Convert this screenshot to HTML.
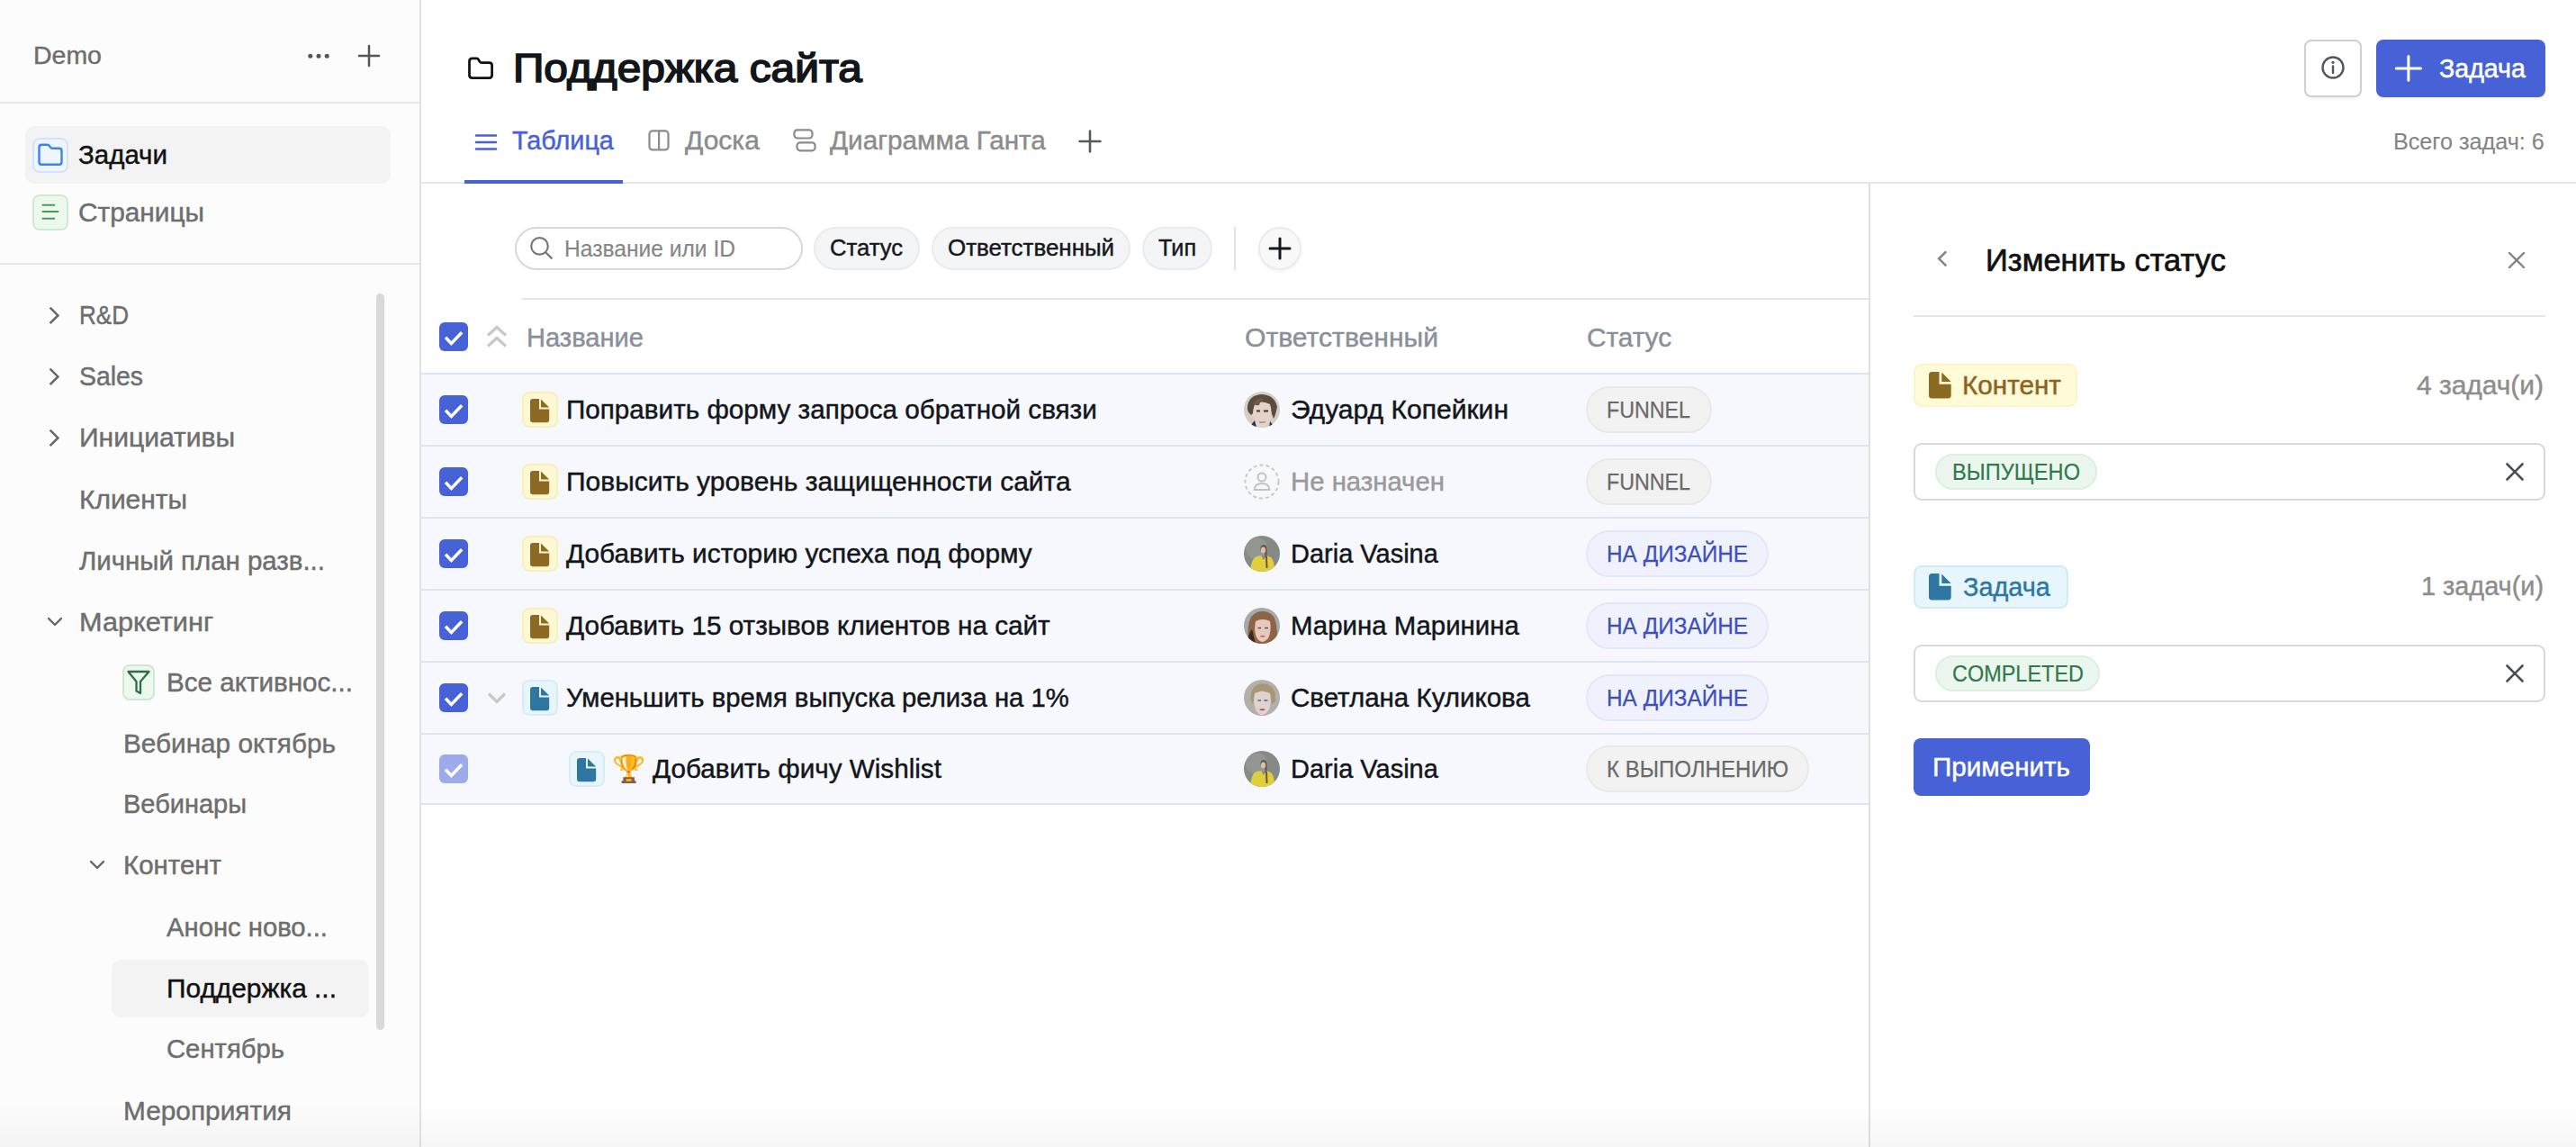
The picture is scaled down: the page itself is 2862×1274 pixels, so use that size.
<!DOCTYPE html>
<html><head><meta charset="utf-8"><style>
html,body{margin:0;padding:0;}
body{width:2862px;height:1274px;overflow:hidden;position:relative;background:#fff;font-family:"Liberation Sans", sans-serif;}
body>div{-webkit-text-stroke:0.45px currentColor;}
@media (max-width: 2000px) { html { zoom: 0.5; } }
</style></head><body>
<div style="position:absolute;left:0px;top:0px;width:466px;height:1274px;background:#fcfcfc;"></div>
<div style="position:absolute;left:466px;top:0px;width:2px;height:1274px;background:#e0e2e6;"></div>
<div style="position:absolute;left:37px;top:47.14px;font-size:28.5px;line-height:28.5px;color:#6e6e6e;font-weight:400;white-space:nowrap;transform:scaleX(0.9988);transform-origin:left center;">Demo</div>
<svg style="position:absolute;left:338px;top:50px" width="32" height="24" viewBox="0 0 32 24" fill="none"><circle cx="6.8" cy="12.3" r="2.5" fill="#555"/><circle cx="16" cy="12.3" r="2.5" fill="#555"/><circle cx="25.2" cy="12.3" r="2.5" fill="#555"/></svg>
<svg style="position:absolute;left:396px;top:48px" width="28" height="28" viewBox="0 0 28 28" fill="none"><path d="M14 3v22M3 14h22" stroke="#555" stroke-width="2.5" stroke-linecap="round"/></svg>
<div style="position:absolute;left:0px;top:113px;width:466px;height:2px;background:#e8e8e8;"></div>
<div style="position:absolute;left:28px;top:140px;width:406px;height:64px;background:#f3f3f3;border-radius:10px;"></div>
<div style="position:absolute;left:36px;top:153px;width:40px;height:39px;background:#eef5ff;border:2px solid #d3e3fc;border-radius:8px;box-sizing:border-box;"></div>
<svg style="position:absolute;left:36px;top:152px" width="40" height="40" viewBox="0 0 40 40" fill="none"><path d="M7.5 11.5 Q7.5 8.8 10.2 8.8 H16.5 Q18 8.8 19 10.2 L20 11.6 Q20.8 12.8 22.3 12.8 H29.8 Q32.5 12.8 32.5 15.5 V28 Q32.5 30.7 29.8 30.7 H10.2 Q7.5 30.7 7.5 28 Z" stroke="#3b82f6" stroke-width="2.4" stroke-linejoin="round"/></svg>
<div style="position:absolute;left:87px;top:157.31px;font-size:29.5px;line-height:29.5px;color:#111;font-weight:400;white-space:nowrap;transform:scaleX(0.9988);transform-origin:left center;">Задачи</div>
<div style="position:absolute;left:36px;top:216px;width:40px;height:40px;background:#ecf7ee;border:2px solid #cfe8d4;border-radius:8px;box-sizing:border-box;"></div>
<svg style="position:absolute;left:36px;top:216px" width="40" height="40" viewBox="0 0 40 40" fill="none"><path d="M10.7 11.8H25M10.7 18.9H29.2M10.7 26.7H25" stroke="#4a9a5c" stroke-width="2"/></svg>
<div style="position:absolute;left:87px;top:221.12px;font-size:29.5px;line-height:29.5px;color:#6e6e6e;font-weight:400;white-space:nowrap;transform:scaleX(1.0108);transform-origin:left center;">Страницы</div>
<div style="position:absolute;left:0px;top:292px;width:466px;height:2px;background:#e8e8e8;"></div>
<div style="position:absolute;left:88px;top:334.51px;font-size:29.5px;line-height:29.5px;color:#6e6e6e;font-weight:400;white-space:nowrap;transform:scaleX(0.8836);transform-origin:left center;">R&amp;D</div>
<svg style="position:absolute;left:52px;top:338px" width="16" height="24" viewBox="0 0 16 24" fill="none"><path d="M3.6 3.6 L12.4 12.4 L3.6 21.2" stroke="#666" stroke-width="2.5"/></svg>
<div style="position:absolute;left:88px;top:402.51px;font-size:29.5px;line-height:29.5px;color:#6e6e6e;font-weight:400;white-space:nowrap;transform:scaleX(0.9627);transform-origin:left center;">Sales</div>
<svg style="position:absolute;left:52px;top:406px" width="16" height="24" viewBox="0 0 16 24" fill="none"><path d="M3.6 3.6 L12.4 12.4 L3.6 21.2" stroke="#666" stroke-width="2.5"/></svg>
<div style="position:absolute;left:88px;top:470.51px;font-size:29.5px;line-height:29.5px;color:#6e6e6e;font-weight:400;white-space:nowrap;transform:scaleX(1.0181);transform-origin:left center;">Инициативы</div>
<svg style="position:absolute;left:52px;top:474px" width="16" height="24" viewBox="0 0 16 24" fill="none"><path d="M3.6 3.6 L12.4 12.4 L3.6 21.2" stroke="#666" stroke-width="2.5"/></svg>
<div style="position:absolute;left:88px;top:539.51px;font-size:29.5px;line-height:29.5px;color:#6e6e6e;font-weight:400;white-space:nowrap;transform:scaleX(1.0144);transform-origin:left center;">Клиенты</div>
<div style="position:absolute;left:88px;top:607.51px;font-size:29.5px;line-height:29.5px;color:#6e6e6e;font-weight:400;white-space:nowrap;transform:scaleX(0.9972);transform-origin:left center;">Личный план разв...</div>
<div style="position:absolute;left:88px;top:675.51px;font-size:29.5px;line-height:29.5px;color:#6e6e6e;font-weight:400;white-space:nowrap;transform:scaleX(1.0393);transform-origin:left center;">Маркетинг</div>
<svg style="position:absolute;left:51px;top:681px" width="20" height="20" viewBox="0 0 20 20" fill="none"><path d="M3 6 L10 13 L17 6" stroke="#666" stroke-width="2.4" stroke-linecap="round" stroke-linejoin="round"/></svg>
<div style="position:absolute;left:136px;top:738px;width:36px;height:40px;background:#ecf7ee;border:2px solid #cfe8d4;border-radius:8px;box-sizing:border-box;"></div>
<svg style="position:absolute;left:136px;top:738px" width="36" height="40" viewBox="0 0 36 40" fill="none"><path d="M6.5 8 H29.5 L20 19 V32 L15.5 29.5 V19 Z" stroke="#2e6e45" stroke-width="2.3" stroke-linejoin="round"/></svg>
<div style="position:absolute;left:185px;top:742.51px;font-size:29.5px;line-height:29.5px;color:#6e6e6e;font-weight:400;white-space:nowrap;transform:scaleX(1.0031);transform-origin:left center;">Все активнос...</div>
<div style="position:absolute;left:137px;top:810.51px;font-size:29.5px;line-height:29.5px;color:#6e6e6e;font-weight:400;white-space:nowrap;transform:scaleX(1.0076);transform-origin:left center;">Вебинар октябрь</div>
<div style="position:absolute;left:137px;top:877.51px;font-size:29.5px;line-height:29.5px;color:#6e6e6e;font-weight:400;white-space:nowrap;transform:scaleX(0.9829);transform-origin:left center;">Вебинары</div>
<svg style="position:absolute;left:98px;top:951px" width="20" height="20" viewBox="0 0 20 20" fill="none"><path d="M3 6 L10 13 L17 6" stroke="#666" stroke-width="2.4" stroke-linecap="round" stroke-linejoin="round"/></svg>
<div style="position:absolute;left:137px;top:945.51px;font-size:29.5px;line-height:29.5px;color:#6e6e6e;font-weight:400;white-space:nowrap;transform:scaleX(0.9973);transform-origin:left center;">Контент</div>
<div style="position:absolute;left:185px;top:1014.51px;font-size:29.5px;line-height:29.5px;color:#6e6e6e;font-weight:400;white-space:nowrap;transform:scaleX(0.9907);transform-origin:left center;">Анонс ново...</div>
<div style="position:absolute;left:124px;top:1066px;width:286px;height:64px;background:#f3f3f3;border-radius:10px;"></div>
<div style="position:absolute;left:185px;top:1082.52px;font-size:29.5px;line-height:29.5px;color:#111;font-weight:400;white-space:nowrap;transform:scaleX(1.0121);transform-origin:left center;">Поддержка ...</div>
<div style="position:absolute;left:185px;top:1149.52px;font-size:29.5px;line-height:29.5px;color:#6e6e6e;font-weight:400;white-space:nowrap;transform:scaleX(0.9912);transform-origin:left center;">Сентябрь</div>
<div style="position:absolute;left:137px;top:1218.52px;font-size:29.5px;line-height:29.5px;color:#6e6e6e;font-weight:400;white-space:nowrap;transform:scaleX(1.0110);transform-origin:left center;">Мероприятия</div>
<div style="position:absolute;left:418px;top:326px;width:9px;height:818px;background:#d9d9d9;border-radius:5px;"></div>
<svg style="position:absolute;left:516px;top:60px" width="36" height="32" viewBox="0 0 36 32" fill="none"><path d="M5.5 8 Q5.5 4.8 8.7 4.8 H13.5 Q15 4.8 15.6 6.2 L17 8.5 Q17.6 9.7 19 9.7 H27.5 Q30.6 9.7 30.6 12.8 V23.5 Q30.6 26.6 27.5 26.6 H8.7 Q5.5 26.6 5.5 23.5 Z" stroke="#0f1215" stroke-width="2.75" stroke-linejoin="round"/></svg>
<div style="position:absolute;left:570px;top:54.07px;font-size:44.5px;line-height:44.5px;color:#12161a;font-weight:400;white-space:nowrap;transform:scaleX(1.0744);transform-origin:left center;-webkit-text-stroke:1.7px #12161a;">Поддержка сайта</div>
<svg style="position:absolute;left:526px;top:144px" width="28" height="28" viewBox="0 0 28 28" fill="none"><path d="M3 6.5H25M3 14H25M3 21.5H25" stroke="#4762d6" stroke-width="2.6" stroke-linecap="round"/></svg>
<div style="position:absolute;left:569px;top:140.51px;font-size:29.5px;line-height:29.5px;color:#4762d6;font-weight:400;white-space:nowrap;transform:scaleX(0.9759);transform-origin:left center;">Таблица</div>
<svg style="position:absolute;left:718px;top:143px" width="28" height="30" viewBox="0 0 28 30" fill="none"><rect x="3.5" y="2.4" width="21" height="21" rx="3.5" stroke="#8c8c8c" stroke-width="2.2"/><path d="M14.1 3V23" stroke="#8c8c8c" stroke-width="2.2"/></svg>
<div style="position:absolute;left:761px;top:140.51px;font-size:29.5px;line-height:29.5px;color:#8c8c8c;font-weight:400;white-space:nowrap;transform:scaleX(1.0176);transform-origin:left center;">Доска</div>
<svg style="position:absolute;left:879px;top:143px" width="30" height="30" viewBox="0 0 30 30" fill="none"><rect x="3.4" y="1.3" width="20.1" height="9.2" rx="3.5" stroke="#8c8c8c" stroke-width="2.2"/><rect x="6.5" y="15.3" width="20.1" height="9" rx="3.5" stroke="#8c8c8c" stroke-width="2.2"/></svg>
<div style="position:absolute;left:922px;top:140.51px;font-size:29.5px;line-height:29.5px;color:#8c8c8c;font-weight:400;white-space:nowrap;transform:scaleX(1.0069);transform-origin:left center;">Диаграмма Ганта</div>
<svg style="position:absolute;left:1197px;top:143px" width="28" height="28" viewBox="0 0 28 28" fill="none"><path d="M14 2.5v23M2.5 14h23" stroke="#555a61" stroke-width="2.6" stroke-linecap="round"/></svg>
<div style="position:absolute;left:468px;top:202px;width:2394px;height:2px;background:#e6e6e6;"></div>
<div style="position:absolute;left:516px;top:200px;width:176px;height:4px;background:#4762d6;"></div>
<div style="position:absolute;left:2560px;top:44px;width:64px;height:64px;background:#fff;border:2px solid #cfd0d6;border-radius:8px;box-sizing:border-box;box-shadow:0 2px 2px rgba(0,0,0,0.05);"></div>
<svg style="position:absolute;left:2578px;top:61px" width="28" height="28" viewBox="0 0 28 28" fill="none"><circle cx="14" cy="14" r="11.5" stroke="#54585e" stroke-width="2.4"/><path d="M14 12.5V20" stroke="#54585e" stroke-width="2.4" stroke-linecap="round"/><circle cx="14" cy="8.3" r="1.6" fill="#54585e"/></svg>
<div style="position:absolute;left:2640px;top:44px;width:188px;height:64px;background:#4762d6;border-radius:8px;box-shadow:0 2px 2px rgba(0,0,0,0.05);"></div>
<svg style="position:absolute;left:2659px;top:59px" width="34" height="34" viewBox="0 0 34 34" fill="none"><path d="M16.9 3.5V30.3M3.3 17.1H30.5" stroke="#fff" stroke-width="3" stroke-linecap="round"/></svg>
<div style="position:absolute;left:2710px;top:62.13px;font-size:29px;line-height:29px;color:#fff;font-weight:400;white-space:nowrap;transform:scaleX(0.9852);transform-origin:left center;-webkit-text-stroke:0.55px #fff;">Задача</div>
<div style="position:absolute;right:35px;top:145.08px;font-size:25.2px;line-height:25.2px;color:#858585;font-weight:400;white-space:nowrap;transform:scaleX(1.0003);transform-origin:right center;-webkit-text-stroke:0.1px #858585;">Всего задач: 6</div>
<div style="position:absolute;left:572px;top:252px;width:320px;height:48px;background:#fff;border:2px solid #d8d8da;border-radius:24px;box-sizing:border-box;"></div>
<svg style="position:absolute;left:586px;top:262px" width="30" height="30" viewBox="0 0 30 30" fill="none"><circle cx="13.5" cy="11.4" r="9.3" stroke="#777" stroke-width="2.2"/><path d="M20.2 18.2L27.4 25.4" stroke="#777" stroke-width="2.2"/></svg>
<div style="position:absolute;left:627px;top:264.05px;font-size:25px;line-height:25px;color:#858585;font-weight:400;white-space:nowrap;transform:scaleX(0.9838);transform-origin:left center;-webkit-text-stroke:0.15px #858585;">Название или ID</div>
<div style="position:absolute;left:904px;top:252px;width:118px;height:48px;background:#f4f5f7;border:2px solid #e9eaed;border-radius:24px;box-sizing:border-box;"></div>
<div style="position:absolute;left:922px;top:262.42px;font-size:26px;line-height:26px;color:#15181c;font-weight:400;white-space:nowrap;transform:scaleX(0.9859);transform-origin:left center;">Статус</div>
<div style="position:absolute;left:1035px;top:252px;width:221px;height:48px;background:#f4f5f7;border:2px solid #e9eaed;border-radius:24px;box-sizing:border-box;"></div>
<div style="position:absolute;left:1053px;top:262.42px;font-size:26px;line-height:26px;color:#15181c;font-weight:400;white-space:nowrap;transform:scaleX(0.9966);transform-origin:left center;">Ответственный</div>
<div style="position:absolute;left:1269px;top:252px;width:78px;height:48px;background:#f4f5f7;border:2px solid #e9eaed;border-radius:24px;box-sizing:border-box;"></div>
<div style="position:absolute;left:1287px;top:262.42px;font-size:26px;line-height:26px;color:#15181c;font-weight:400;white-space:nowrap;transform:scaleX(0.9702);transform-origin:left center;">Тип</div>
<div style="position:absolute;left:1371px;top:252px;width:2px;height:48px;background:#e2e2e2;"></div>
<div style="position:absolute;left:1398px;top:252px;width:48px;height:48px;background:#f8f8f9;border:2px solid #ececee;border-radius:24px;box-sizing:border-box;box-shadow:0 2px 3px rgba(0,0,0,0.05);"></div>
<svg style="position:absolute;left:1408px;top:262px" width="28" height="28" viewBox="0 0 28 28" fill="none"><path d="M14 3v22M3 14h22" stroke="#15181c" stroke-width="3" stroke-linecap="round"/></svg>
<div style="position:absolute;left:580px;top:331px;width:1496px;height:2px;background:#e6e6e6;"></div>
<div style="position:absolute;left:488px;top:358px;width:32px;height:32px;background:#4762d6;border-radius:6px;"></div>
<svg style="position:absolute;left:488px;top:358px" width="32" height="32" viewBox="0 0 32 32" fill="none"><path d="M7 16.8 L13.4 23.4 L25.2 11.2" stroke="#fff" stroke-width="3.5"/></svg>
<svg style="position:absolute;left:538px;top:356px" width="28" height="36" viewBox="0 0 28 36" fill="none"><path d="M4 16.5 L14 7.5 L24 16.5M4 28.5 L14 19.5 L24 28.5" stroke="#c8c8c8" stroke-width="3.2"/></svg>
<div style="position:absolute;left:585px;top:359.51px;font-size:29.5px;line-height:29.5px;color:#8a9099;font-weight:400;white-space:nowrap;transform:scaleX(0.9859);transform-origin:left center;">Название</div>
<div style="position:absolute;left:1383px;top:359.51px;font-size:29.5px;line-height:29.5px;color:#8a9099;font-weight:400;white-space:nowrap;transform:scaleX(1.0207);transform-origin:left center;">Ответственный</div>
<div style="position:absolute;left:1763px;top:359.51px;font-size:29.5px;line-height:29.5px;color:#8a9099;font-weight:400;white-space:nowrap;transform:scaleX(1.0084);transform-origin:left center;">Статус</div>
<div style="position:absolute;left:468px;top:416px;width:1608px;height:79px;background:#f7f8fe;"></div>
<div style="position:absolute;left:468px;top:496px;width:1608px;height:79px;background:#f7f8fe;"></div>
<div style="position:absolute;left:468px;top:576px;width:1608px;height:79px;background:#f7f8fe;"></div>
<div style="position:absolute;left:468px;top:656px;width:1608px;height:79px;background:#f7f8fe;"></div>
<div style="position:absolute;left:468px;top:736px;width:1608px;height:79px;background:#f7f8fe;"></div>
<div style="position:absolute;left:468px;top:816px;width:1608px;height:77px;background:#f7f8fe;"></div>
<div style="position:absolute;left:468px;top:414px;width:1608px;height:2px;background:#dce2f8;"></div>
<div style="position:absolute;left:468px;top:494px;width:1608px;height:2px;background:#dce2f8;"></div>
<div style="position:absolute;left:468px;top:574px;width:1608px;height:2px;background:#dce2f8;"></div>
<div style="position:absolute;left:468px;top:654px;width:1608px;height:2px;background:#dce2f8;"></div>
<div style="position:absolute;left:468px;top:734px;width:1608px;height:2px;background:#dce2f8;"></div>
<div style="position:absolute;left:468px;top:814px;width:1608px;height:2px;background:#dce2f8;"></div>
<div style="position:absolute;left:468px;top:892px;width:1608px;height:2px;background:#dce2f8;"></div>
<div style="position:absolute;left:488px;top:439px;width:32px;height:32px;background:#4762d6;border-radius:6px;"></div>
<svg style="position:absolute;left:488px;top:439px" width="32" height="32" viewBox="0 0 32 32" fill="none"><path d="M7 16.8 L13.4 23.4 L25.2 11.2" stroke="#fff" stroke-width="3.5"/></svg>
<div style="position:absolute;left:580px;top:435px;width:40px;height:40px;background:#fef8d6;border:2px solid #faefb6;border-radius:8px;box-sizing:border-box;"></div>
<svg style="position:absolute;left:589px;top:443px" width="22" height="27" viewBox="0 0 22 27" fill="none"><path d="M3 0 H10 V11.4 H21.2 V23.2 Q21.2 26.2 18.2 26.2 H3 Q0 26.2 0 23.2 V3 Q0 0 3 0 Z" fill="#8d6a22"/><path d="M12 0.4 L21.2 9.4 H12 Z" fill="#8d6a22"/></svg>
<div style="position:absolute;left:629px;top:440.35px;font-size:29.7px;line-height:29.7px;color:#12161a;font-weight:400;white-space:nowrap;transform:scaleX(0.9988);transform-origin:left center;">Поправить форму запроса обратной связи</div>
<svg style="position:absolute;left:1382px;top:435px" width="40" height="40" viewBox="0 0 40 40" fill="none"><defs><clipPath id="ced435"><circle cx="20" cy="20" r="20"/></clipPath></defs><g clip-path="url(#ced435)"><rect width="40" height="40" fill="#d3cfc6"/><path d="M4 16 Q6 4 19 3 Q34 3 37 17 Q35 27 33 30 L30 22 Q24 10 15 12 Q10 16 10 24 L8 26 Q3 22 4 16 Z" fill="#5b4d3d"/><path d="M12 14 Q20 9 29 14 Q32 22 29 32 Q24 40 20 40 Q15 40 12 33 Q9 24 12 14 Z" fill="#e3d3c8"/><path d="M10 13 Q16 6 23 8 Q18 10 17 15 Q13 16 10 13 Z" fill="#6a5a47"/><path d="M14 21.5 H18 M22 21.5 H27" stroke="#3e342c" stroke-width="1.8"/><path d="M17 33.5 Q20 35 24 33.5" stroke="#b48a88" stroke-width="1.6"/><path d="M7 38 L12 32 L14 40 Z M33 38 L29 33 L28 40 Z" fill="#2a3550"/></g></svg>
<div style="position:absolute;left:1434px;top:440.43px;font-size:29.6px;line-height:29.6px;color:#12161a;font-weight:400;white-space:nowrap;transform:scaleX(1.0156);transform-origin:left center;">Эдуард Копейкин</div>
<div style="position:absolute;left:1762px;top:429px;width:140px;height:52px;background:#f2f2f2;border:2px solid #e9e9e9;border-radius:26px;box-sizing:border-box;"></div>
<div style="position:absolute;left:1785px;top:442.63px;font-size:25.5px;line-height:25.5px;color:#6a6a6a;font-weight:400;white-space:nowrap;transform:scaleX(0.9118);transform-origin:left center;-webkit-text-stroke:0.25px #6a6a6a;">FUNNEL</div>
<div style="position:absolute;left:488px;top:519px;width:32px;height:32px;background:#4762d6;border-radius:6px;"></div>
<svg style="position:absolute;left:488px;top:519px" width="32" height="32" viewBox="0 0 32 32" fill="none"><path d="M7 16.8 L13.4 23.4 L25.2 11.2" stroke="#fff" stroke-width="3.5"/></svg>
<div style="position:absolute;left:580px;top:515px;width:40px;height:40px;background:#fef8d6;border:2px solid #faefb6;border-radius:8px;box-sizing:border-box;"></div>
<svg style="position:absolute;left:589px;top:523px" width="22" height="27" viewBox="0 0 22 27" fill="none"><path d="M3 0 H10 V11.4 H21.2 V23.2 Q21.2 26.2 18.2 26.2 H3 Q0 26.2 0 23.2 V3 Q0 0 3 0 Z" fill="#8d6a22"/><path d="M12 0.4 L21.2 9.4 H12 Z" fill="#8d6a22"/></svg>
<div style="position:absolute;left:629px;top:520.35px;font-size:29.7px;line-height:29.7px;color:#12161a;font-weight:400;white-space:nowrap;transform:scaleX(1.0096);transform-origin:left center;">Повысить уровень защищенности сайта</div>
<svg style="position:absolute;left:1382px;top:515px" width="40" height="40" viewBox="0 0 40 40" fill="none"><circle cx="20" cy="20" r="18.5" stroke="#c9c9c9" stroke-width="2" stroke-dasharray="4 3"/><circle cx="20" cy="15" r="4.5" stroke="#c2c2c2" stroke-width="2"/><path d="M11.5 29 Q12 22 20 22 Q28 22 28.5 29 Z" stroke="#c2c2c2" stroke-width="2" stroke-linejoin="round"/></svg>
<div style="position:absolute;left:1434px;top:520.43px;font-size:29.6px;line-height:29.6px;color:#9a9a9a;font-weight:400;white-space:nowrap;transform:scaleX(0.9909);transform-origin:left center;">Не назначен</div>
<div style="position:absolute;left:1762px;top:509px;width:140px;height:52px;background:#f2f2f2;border:2px solid #e9e9e9;border-radius:26px;box-sizing:border-box;"></div>
<div style="position:absolute;left:1785px;top:522.63px;font-size:25.5px;line-height:25.5px;color:#6a6a6a;font-weight:400;white-space:nowrap;transform:scaleX(0.9118);transform-origin:left center;-webkit-text-stroke:0.25px #6a6a6a;">FUNNEL</div>
<div style="position:absolute;left:488px;top:599px;width:32px;height:32px;background:#4762d6;border-radius:6px;"></div>
<svg style="position:absolute;left:488px;top:599px" width="32" height="32" viewBox="0 0 32 32" fill="none"><path d="M7 16.8 L13.4 23.4 L25.2 11.2" stroke="#fff" stroke-width="3.5"/></svg>
<div style="position:absolute;left:580px;top:595px;width:40px;height:40px;background:#fef8d6;border:2px solid #faefb6;border-radius:8px;box-sizing:border-box;"></div>
<svg style="position:absolute;left:589px;top:603px" width="22" height="27" viewBox="0 0 22 27" fill="none"><path d="M3 0 H10 V11.4 H21.2 V23.2 Q21.2 26.2 18.2 26.2 H3 Q0 26.2 0 23.2 V3 Q0 0 3 0 Z" fill="#8d6a22"/><path d="M12 0.4 L21.2 9.4 H12 Z" fill="#8d6a22"/></svg>
<div style="position:absolute;left:629px;top:600.35px;font-size:29.7px;line-height:29.7px;color:#12161a;font-weight:400;white-space:nowrap;transform:scaleX(1.0047);transform-origin:left center;">Добавить историю успеха под форму</div>
<svg style="position:absolute;left:1382px;top:595px" width="40" height="40" viewBox="0 0 40 40" fill="none"><defs><clipPath id="cda595"><circle cx="20" cy="20" r="20"/></clipPath></defs><g clip-path="url(#cda595)"><rect width="40" height="40" fill="#858a87"/><circle cx="14" cy="14" r="12" fill="#9a9e9b" opacity="0.6"/><path d="M18.5 16 Q18 10 22 10 Q26 10 25.5 16 L26 33 L24 33 L23.5 20 Z" fill="#6b5440"/><ellipse cx="21.5" cy="16" rx="2.6" ry="3.6" fill="#dcbfae"/><path d="M7 40 Q8 25 14 23 L19 22 L22 27 L25 22 L30 24 Q34 27 34 40 Z" fill="#e0cf3c"/><path d="M24 22 L26 23 L26.5 36 L24.5 36 Z" fill="#6b5440"/></g></svg>
<div style="position:absolute;left:1434px;top:600.43px;font-size:29.6px;line-height:29.6px;color:#12161a;font-weight:400;white-space:nowrap;transform:scaleX(0.9798);transform-origin:left center;">Daria Vasina</div>
<div style="position:absolute;left:1762px;top:589px;width:203px;height:52px;background:#eff2fd;border:2px solid #e2e7fa;border-radius:26px;box-sizing:border-box;"></div>
<div style="position:absolute;left:1785px;top:602.63px;font-size:25.5px;line-height:25.5px;color:#3d4fb8;font-weight:400;white-space:nowrap;transform:scaleX(0.9560);transform-origin:left center;-webkit-text-stroke:0.25px #3d4fb8;">НА ДИЗАЙНЕ</div>
<div style="position:absolute;left:488px;top:679px;width:32px;height:32px;background:#4762d6;border-radius:6px;"></div>
<svg style="position:absolute;left:488px;top:679px" width="32" height="32" viewBox="0 0 32 32" fill="none"><path d="M7 16.8 L13.4 23.4 L25.2 11.2" stroke="#fff" stroke-width="3.5"/></svg>
<div style="position:absolute;left:580px;top:675px;width:40px;height:40px;background:#fef8d6;border:2px solid #faefb6;border-radius:8px;box-sizing:border-box;"></div>
<svg style="position:absolute;left:589px;top:683px" width="22" height="27" viewBox="0 0 22 27" fill="none"><path d="M3 0 H10 V11.4 H21.2 V23.2 Q21.2 26.2 18.2 26.2 H3 Q0 26.2 0 23.2 V3 Q0 0 3 0 Z" fill="#8d6a22"/><path d="M12 0.4 L21.2 9.4 H12 Z" fill="#8d6a22"/></svg>
<div style="position:absolute;left:629px;top:680.35px;font-size:29.7px;line-height:29.7px;color:#12161a;font-weight:400;white-space:nowrap;transform:scaleX(1.0000);transform-origin:left center;">Добавить 15 отзывов клиентов на сайт</div>
<svg style="position:absolute;left:1382px;top:675px" width="40" height="40" viewBox="0 0 40 40" fill="none"><defs><clipPath id="cma675"><circle cx="20" cy="20" r="20"/></clipPath></defs><g clip-path="url(#cma675)"><rect width="40" height="40" fill="#a7a9a8"/><path d="M5 40 Q3 20 8 10 Q14 3 22 4 Q32 5 35 14 Q38 26 36 40 Z" fill="#8c6446"/><path d="M4 40 Q5 28 9 24 L13 40 Z" fill="#3b2a22"/><path d="M13 15 Q21 11 29 15 Q31 26 27 34 Q23 38 20 38 Q16 37 13.5 32 Q11 24 13 15 Z" fill="#e8c8b8"/><path d="M15.5 22.5 H19 M23 22.5 H27" stroke="#3f5d7a" stroke-width="1.6"/><path d="M17.5 31.5 Q20.5 30 24 31.5 Q20.5 34 17.5 31.5 Z" fill="#c9607a"/></g></svg>
<div style="position:absolute;left:1434px;top:680.43px;font-size:29.6px;line-height:29.6px;color:#12161a;font-weight:400;white-space:nowrap;transform:scaleX(0.9932);transform-origin:left center;">Марина Маринина</div>
<div style="position:absolute;left:1762px;top:669px;width:203px;height:52px;background:#eff2fd;border:2px solid #e2e7fa;border-radius:26px;box-sizing:border-box;"></div>
<div style="position:absolute;left:1785px;top:682.63px;font-size:25.5px;line-height:25.5px;color:#3d4fb8;font-weight:400;white-space:nowrap;transform:scaleX(0.9560);transform-origin:left center;-webkit-text-stroke:0.25px #3d4fb8;">НА ДИЗАЙНЕ</div>
<div style="position:absolute;left:488px;top:759px;width:32px;height:32px;background:#4762d6;border-radius:6px;"></div>
<svg style="position:absolute;left:488px;top:759px" width="32" height="32" viewBox="0 0 32 32" fill="none"><path d="M7 16.8 L13.4 23.4 L25.2 11.2" stroke="#fff" stroke-width="3.5"/></svg>
<div style="position:absolute;left:580px;top:755px;width:40px;height:40px;background:#e8f6fc;border:2px solid #d6edf9;border-radius:8px;box-sizing:border-box;"></div>
<svg style="position:absolute;left:589px;top:763px" width="22" height="27" viewBox="0 0 22 27" fill="none"><path d="M3 0 H10 V11.4 H21.2 V23.2 Q21.2 26.2 18.2 26.2 H3 Q0 26.2 0 23.2 V3 Q0 0 3 0 Z" fill="#2f77a3"/><path d="M12 0.4 L21.2 9.4 H12 Z" fill="#2f77a3"/></svg>
<div style="position:absolute;left:629px;top:760.35px;font-size:29.7px;line-height:29.7px;color:#12161a;font-weight:400;white-space:nowrap;transform:scaleX(0.9857);transform-origin:left center;">Уменьшить время выпуска релиза на 1%</div>
<svg style="position:absolute;left:540px;top:764px" width="24" height="22" viewBox="0 0 24 22" fill="none"><path d="M3 6.5 L12 15.5 L21 6.5" stroke="#c8c8c8" stroke-width="3.2"/></svg>
<svg style="position:absolute;left:1382px;top:755px" width="40" height="40" viewBox="0 0 40 40" fill="none"><defs><clipPath id="csv755"><circle cx="20" cy="20" r="20"/></clipPath></defs><g clip-path="url(#csv755)"><rect width="40" height="40" fill="#b3b0aa"/><path d="M8 24 Q6 9 16 5 Q24 3 30 7 Q36 12 35 24 L31 27 Q30 14 20 12 Q11 14 10 27 Z" fill="#a99677"/><path d="M12 15 Q20 11 29 15 Q31 25 28 33 Q24 39 20 39 Q16 39 13 33 Q10 25 12 15 Z" fill="#e0d2cf"/><path d="M15.5 23 H19 M22.5 23 H26.5" stroke="#4a5f7c" stroke-width="1.6"/><path d="M17 33 Q20.5 31.5 24 33 Q20.5 35.5 17 33 Z" fill="#c03a58"/></g></svg>
<div style="position:absolute;left:1434px;top:760.43px;font-size:29.6px;line-height:29.6px;color:#12161a;font-weight:400;white-space:nowrap;transform:scaleX(0.9968);transform-origin:left center;">Светлана Куликова</div>
<div style="position:absolute;left:1762px;top:749px;width:203px;height:52px;background:#eff2fd;border:2px solid #e2e7fa;border-radius:26px;box-sizing:border-box;"></div>
<div style="position:absolute;left:1785px;top:762.63px;font-size:25.5px;line-height:25.5px;color:#3d4fb8;font-weight:400;white-space:nowrap;transform:scaleX(0.9560);transform-origin:left center;-webkit-text-stroke:0.25px #3d4fb8;">НА ДИЗАЙНЕ</div>
<div style="position:absolute;left:488px;top:838px;width:32px;height:32px;background:#9eabea;border-radius:6px;"></div>
<svg style="position:absolute;left:488px;top:838px" width="32" height="32" viewBox="0 0 32 32" fill="none"><path d="M7 16.8 L13.4 23.4 L25.2 11.2" stroke="#fff" stroke-width="3.5"/></svg>
<div style="position:absolute;left:632px;top:834px;width:40px;height:40px;background:#e8f6fc;border:2px solid #d6edf9;border-radius:8px;box-sizing:border-box;"></div>
<svg style="position:absolute;left:641px;top:842px" width="22" height="27" viewBox="0 0 22 27" fill="none"><path d="M3 0 H10 V11.4 H21.2 V23.2 Q21.2 26.2 18.2 26.2 H3 Q0 26.2 0 23.2 V3 Q0 0 3 0 Z" fill="#2f77a3"/><path d="M12 0.4 L21.2 9.4 H12 Z" fill="#2f77a3"/></svg>
<div style="position:absolute;left:680px;top:839.10px;font-size:30px;line-height:30px;color:#b8860b;font-weight:400;white-space:nowrap;font-family:serif;-webkit-text-stroke:0;">&#127942;</div>
<div style="position:absolute;left:725px;top:839.35px;font-size:29.7px;line-height:29.7px;color:#12161a;font-weight:400;white-space:nowrap;transform:scaleX(0.9989);transform-origin:left center;">Добавить фичу Wishlist</div>
<svg style="position:absolute;left:1382px;top:834px" width="40" height="40" viewBox="0 0 40 40" fill="none"><defs><clipPath id="cda834"><circle cx="20" cy="20" r="20"/></clipPath></defs><g clip-path="url(#cda834)"><rect width="40" height="40" fill="#858a87"/><circle cx="14" cy="14" r="12" fill="#9a9e9b" opacity="0.6"/><path d="M18.5 16 Q18 10 22 10 Q26 10 25.5 16 L26 33 L24 33 L23.5 20 Z" fill="#6b5440"/><ellipse cx="21.5" cy="16" rx="2.6" ry="3.6" fill="#dcbfae"/><path d="M7 40 Q8 25 14 23 L19 22 L22 27 L25 22 L30 24 Q34 27 34 40 Z" fill="#e0cf3c"/><path d="M24 22 L26 23 L26.5 36 L24.5 36 Z" fill="#6b5440"/></g></svg>
<div style="position:absolute;left:1434px;top:839.43px;font-size:29.6px;line-height:29.6px;color:#12161a;font-weight:400;white-space:nowrap;transform:scaleX(0.9798);transform-origin:left center;">Daria Vasina</div>
<div style="position:absolute;left:1762px;top:828px;width:248px;height:52px;background:#f2f2f2;border:2px solid #e9e9e9;border-radius:26px;box-sizing:border-box;"></div>
<div style="position:absolute;left:1785px;top:841.63px;font-size:25.5px;line-height:25.5px;color:#6a6a6a;font-weight:400;white-space:nowrap;transform:scaleX(0.9436);transform-origin:left center;-webkit-text-stroke:0.25px #6a6a6a;">К ВЫПОЛНЕНИЮ</div>
<div style="position:absolute;left:2076px;top:204px;width:2px;height:1070px;background:#dde0e4;"></div>
<svg style="position:absolute;left:2146px;top:276px" width="24" height="24" viewBox="0 0 24 24" fill="none"><path d="M16.3 3.3 L8.2 11.3 L16.3 19.3" stroke="#7e868e" stroke-width="2.6"/></svg>
<div style="position:absolute;left:2206px;top:271.62px;font-size:34.8px;line-height:34.8px;color:#111;font-weight:400;white-space:nowrap;transform:scaleX(0.9926);transform-origin:left center;-webkit-text-stroke:0.7px #111;">Изменить статус</div>
<svg style="position:absolute;left:2783px;top:276px" width="26" height="26" viewBox="0 0 26 26" fill="none"><path d="M5 5 L21 21 M21 5 L5 21" stroke="#80858c" stroke-width="2.4" stroke-linecap="round"/></svg>
<div style="position:absolute;left:2126px;top:350px;width:702px;height:2px;background:#e6e6e6;"></div>
<div style="position:absolute;left:2126px;top:404px;width:182px;height:48px;background:#fffad8;border:2px solid #fcf3c6;border-radius:9px;box-sizing:border-box;"></div>
<svg style="position:absolute;left:2143px;top:413px" width="26" height="30" viewBox="0 0 26 30" fill="none"><path d="M3.5 0 H11.5 V13.8 H24.7 V26 Q24.7 29.5 21.2 29.5 H3.5 Q0 29.5 0 26 V3.5 Q0 0 3.5 0 Z" fill="#8d6a22"/><path d="M14.3 0.6 L24.6 11 H14.3 Z" fill="#8d6a22"/></svg>
<div style="position:absolute;left:2180px;top:413.35px;font-size:29.7px;line-height:29.7px;color:#8a6420;font-weight:400;white-space:nowrap;transform:scaleX(0.9997);transform-origin:left center;">Контент</div>
<div style="position:absolute;right:36px;top:412.81px;font-size:29.5px;line-height:29.5px;color:#8e8e8e;font-weight:400;white-space:nowrap;transform:scaleX(1.0148);transform-origin:right center;">4 задач(и)</div>
<div style="position:absolute;left:2126px;top:492px;width:702px;height:64px;background:#fff;border:2px solid #d5d8dd;border-radius:9px;box-sizing:border-box;"></div>
<div style="position:absolute;left:2150px;top:504px;width:180px;height:40px;background:#ebf7ee;border:2px solid #dcefe1;border-radius:20px;box-sizing:border-box;"></div>
<div style="position:absolute;left:2169px;top:511.83px;font-size:25.5px;line-height:25.5px;color:#2f7a4a;font-weight:400;white-space:nowrap;transform:scaleX(0.9266);transform-origin:left center;-webkit-text-stroke:0.2px #2f7a4a;">ВЫПУЩЕНО</div>
<svg style="position:absolute;left:2780px;top:510px" width="28" height="28" viewBox="0 0 28 28" fill="none"><path d="M5.5 5.5 L22.5 22.5 M22.5 5.5 L5.5 22.5" stroke="#4a4e54" stroke-width="2.6" stroke-linecap="round"/></svg>
<div style="position:absolute;left:2126px;top:628px;width:172px;height:48px;background:#e7f5fc;border:2px solid #d0eaf8;border-radius:9px;box-sizing:border-box;"></div>
<svg style="position:absolute;left:2143px;top:637px" width="26" height="30" viewBox="0 0 26 30" fill="none"><path d="M3.5 0 H11.5 V13.8 H24.7 V26 Q24.7 29.5 21.2 29.5 H3.5 Q0 29.5 0 26 V3.5 Q0 0 3.5 0 Z" fill="#2f77a3"/><path d="M14.3 0.6 L24.6 11 H14.3 Z" fill="#2f77a3"/></svg>
<div style="position:absolute;left:2181px;top:637.35px;font-size:29.7px;line-height:29.7px;color:#2f77a3;font-weight:400;white-space:nowrap;transform:scaleX(0.9720);transform-origin:left center;">Задача</div>
<div style="position:absolute;right:36px;top:636.31px;font-size:29.5px;line-height:29.5px;color:#8e8e8e;font-weight:400;white-space:nowrap;transform:scaleX(0.9788);transform-origin:right center;">1 задач(и)</div>
<div style="position:absolute;left:2126px;top:716px;width:702px;height:64px;background:#fff;border:2px solid #d5d8dd;border-radius:9px;box-sizing:border-box;"></div>
<div style="position:absolute;left:2150px;top:728px;width:183px;height:40px;background:#ebf7ee;border:2px solid #dcefe1;border-radius:20px;box-sizing:border-box;"></div>
<div style="position:absolute;left:2169px;top:735.84px;font-size:25.5px;line-height:25.5px;color:#2f7a4a;font-weight:400;white-space:nowrap;transform:scaleX(0.9198);transform-origin:left center;-webkit-text-stroke:0.2px #2f7a4a;">COMPLETED</div>
<svg style="position:absolute;left:2780px;top:734px" width="28" height="28" viewBox="0 0 28 28" fill="none"><path d="M5.5 5.5 L22.5 22.5 M22.5 5.5 L5.5 22.5" stroke="#4a4e54" stroke-width="2.6" stroke-linecap="round"/></svg>
<div style="position:absolute;left:2126px;top:820px;width:196px;height:64px;background:#4762d6;border-radius:8px;"></div>
<div style="position:absolute;left:2147px;top:837.23px;font-size:29.6px;line-height:29.6px;color:#fff;font-weight:400;white-space:nowrap;transform:scaleX(1.0008);transform-origin:left center;">Применить</div>
<div style="position:absolute;left:0px;top:1225px;width:2862px;height:49px;background:linear-gradient(to bottom, rgba(0,0,0,0), rgba(0,0,0,0.03));pointer-events:none;"></div>
</body></html>
